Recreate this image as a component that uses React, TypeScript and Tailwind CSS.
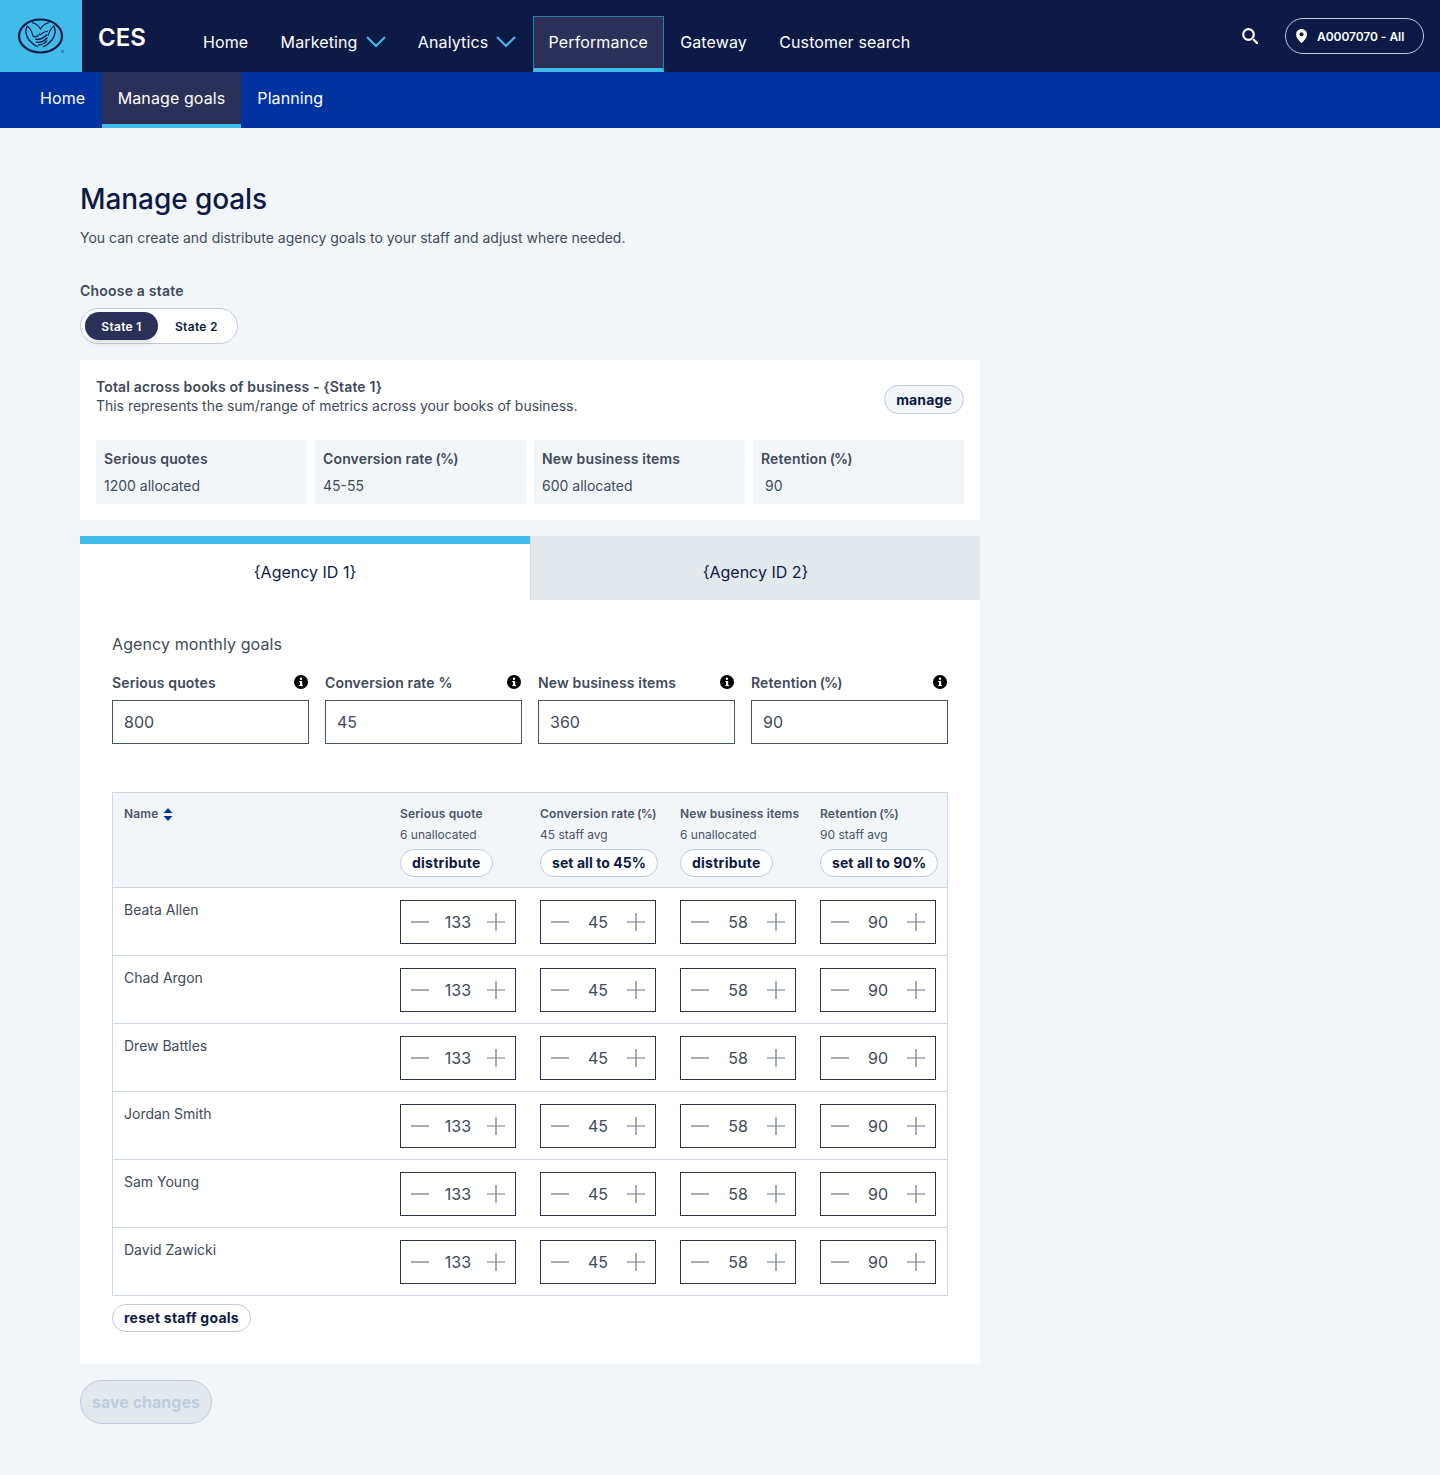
import React from "react";

const staff = ["Beata Allen", "Chad Argon", "Drew Battles", "Jordan Smith", "Sam Young", "David Zawicki"];
const stats = [
  { label: "Serious quotes", value: "1200 allocated" },
  { label: "Conversion rate", pct: true, value: "45-55" },
  { label: "New business items", value: "600 allocated" },
  { label: "Retention", pct: true, value: "90", indent: true },
];
const goals = [
  { label: "Serious quotes", value: "800" },
  { label: "Conversion rate %", value: "45" },
  { label: "New business items", value: "360" },
  { label: "Retention", pct: true, value: "90" },
];
const columns = [
  { title: "Serious quote", sub: "6 unallocated", action: "distribute" },
  { title: "Conversion rate", pct: true, sub: "45 staff avg", action: "set all to 45%" },
  { title: "New business items", sub: "6 unallocated", action: "distribute" },
  { title: "Retention", pct: true, sub: "90 staff avg", action: "set all to 90%" },
];

// the "(%)" is set tighter than the rest of the label
const Pct = () => <span className="tracking-[-0.8px]"> (%)</span>;

const Logo = () => (
  <svg width="48" height="38" viewBox="0 0 48 38" fill="none" stroke="#0d1a45">
    <ellipse cx="23.5" cy="19" rx="21.5" ry="16.500" strokeWidth="2.200" />
    <path d="M15 5.500c3.500 1 6.500 3 8.500 6.500 2-3.500 5-5.500 8.500-6.500" strokeWidth="1.300" />
    <path d="M10 9c-2 5-1 10 2 14 2.500 3 5.500 5.500 9 7" strokeWidth="1.300" />
    <path d="M37 9c2 5 1 10-2 14-2.500 3-5.500 5.500-9 7" strokeWidth="1.300" />
    <path d="M10 9c3 2 5 6 6 10M37 9c-3 2-5 6-6 10M16 19c2 1.500 5 1 7-2.500M31 14c-3 .500-6 2-8 4" strokeWidth="1.100" />
    <path d="M18 22c4 1.500 9-1 12-4.500M19 25c4 1 8.500-1 11.500-4.500M21 28c3.500 0 7-1.500 9-4.500" strokeWidth="1.300" />
    <circle cx="45.500" cy="34.500" r="1" strokeWidth="0.500" />
  </svg>
);

const SearchIcon = () => (
  <svg width="16" height="16" viewBox="0 0 16 16" fill="none" stroke="#fff">
    <circle cx="6.500" cy="6.500" r="5.300" strokeWidth="2.200" />
    <path d="M12 12l3 3" strokeWidth="2.400" strokeLinecap="round" />
  </svg>
);

const PinIcon = () => (
  <svg width="11" height="14" viewBox="0 0 11 14">
    <path d="M5.500 0C2.500 0 0 2.400 0 5.400 0 9.300 5.500 14 5.500 14S11 9.300 11 5.400C11 2.400 8.500 0 5.500 0z" fill="#fff" />
    <circle cx="5.500" cy="5.300" r="2" fill="#0d1a45" />
  </svg>
);

const NavChevron = () => (
  <svg width="20" height="12" viewBox="0 0 20 12" fill="none" stroke="#41bbe8" strokeWidth="2">
    <path d="M1 1l9 9 9-9" />
  </svg>
);

const InfoDot = () => (
  <svg width="14" height="14" viewBox="0 0 14 14" className="-mt-[2px] mr-px">
    <circle cx="7" cy="7" r="7" fill="#000" />
    <rect x="6" y="6" width="2.200" height="5" fill="#fff" />
    <rect x="5.200" y="6" width="1.500" height="1.100" fill="#fff" />
    <rect x="5.200" y="10.100" width="3.800" height="1" fill="#fff" />
    <circle cx="7" cy="3.800" r="1.200" fill="#fff" />
  </svg>
);

const SortArrows = () => (
  <svg width="10" height="13" viewBox="0 0 10 13" fill="#0033a0">
    <path d="M5 0l4.500 5h-9z" />
    <path d="M5 13l4.500-5h-9z" />
  </svg>
);

const MinusIcon = () => (
  <svg width="18" height="18" viewBox="0 0 18 18" fill="none" stroke="#8b91a6" strokeWidth="1.500">
    <path d="M0 9h18" />
  </svg>
);

const PlusIcon = () => (
  <svg width="18" height="18" viewBox="0 0 18 18" fill="none" stroke="#6f7689" strokeWidth="1.200">
    <path d="M0 9h18M9 0v18" />
  </svg>
);

const Pill = ({ children, wide }: { children: React.ReactNode; wide?: boolean }) => (
  <button
    className={
      wide
        ? "inline-flex h-7 items-center whitespace-nowrap rounded-full border border-[#c0cbdc] bg-white px-[11px] text-sm font-bold tracking-[0.25px] text-[#0d1a45]"
        : "inline-flex h-7 items-center whitespace-nowrap rounded-full border border-[#c0cbdc] bg-white px-[11px] text-sm font-bold tracking-[0.07px] text-[#0d1a45]"
    }
  >
    {children}
  </button>
);

const Stepper = ({ value }: { value: string }) => (
  <div className="flex h-11 w-[116px] items-center justify-between border border-[#2d3748] bg-white px-[10px]">
    <MinusIcon />
    <span className="text-base text-[#3f4a5a]">{value}</span>
    <PlusIcon />
  </div>
);

const NavItem = ({ label, menu, active }: { label: string; menu?: boolean; active?: boolean }) => (
  <div
    className={
      active
        ? "mt-4 flex h-14 items-center border-x border-t border-[#2e7ea8] border-b-4 border-b-[#41bbe8] bg-[#2a3057] px-[15px] pb-px text-base tracking-[0.12px] text-white"
        : "mt-4 flex h-14 items-center gap-2 px-4 pb-[4px] text-base tracking-[0.12px] text-white"
    }
  >
    {label}
    {menu && <NavChevron />}
  </div>
);

export default function App() {
  return (
    <div className="min-h-[1475px] bg-[#f2f6f9] font-['Inter',sans-serif] text-[#3f4a5a]">
      <header className="flex h-[72px] items-start bg-[#0d1a45]">
        <div className="flex h-[72px] w-[82px] items-center justify-center bg-[#41bbe8]">
          <Logo />
        </div>
        <div className="ml-4 mt-[20px] w-[89px] text-2xl font-semibold leading-9 text-white">CES</div>
        <nav className="flex gap-[0.3px]">
          <NavItem label="Home" />
          <NavItem label="Marketing" menu />
          <NavItem label="Analytics" menu />
          <NavItem label="Performance" active />
          <NavItem label="Gateway" />
          <NavItem label="Customer search" />
        </nav>
        <div className="ml-auto mr-4 mt-[18px] flex items-center gap-[27px]">
          <SearchIcon />
          <div className="flex h-9 w-[139px] items-center gap-[10px] rounded-full border border-[#c0cbdc] pl-[10px] text-xs font-semibold text-white">
            <PinIcon />
            <span className="pt-px tracking-[-0.05px]">A0007070 - All</span>
          </div>
        </div>
      </header>

      <div className="flex h-14 items-start bg-[#0033a0] pl-6 text-base tracking-[0.1px] text-white">
        <div className="flex h-14 items-center pb-1 pl-4 pr-[16.5px]">Home</div>
        <div className="flex h-14 items-center border-b-4 border-[#41bbe8] bg-[#2a3057] px-4">Manage goals</div>
        <div className="flex h-14 items-center px-4 pb-1">Planning</div>
      </div>

      <main className="w-[980px] pl-20 pt-[53px]">
        <h1 className="text-[28px] font-medium leading-9 tracking-[-0.08px] text-[#0d1a45]">Manage goals</h1>
        <p className="mt-[11px] text-sm leading-5">You can create and distribute agency goals to your staff and adjust where needed.</p>

        <div className="mt-[33px] text-sm font-semibold leading-5 tracking-[0.2px]">Choose a state</div>
        <div className="mt-[7px] flex h-9 w-[158px] items-center rounded-full border border-[#c0cbdc] bg-white pl-[4px] text-xs font-semibold tracking-[0.3px]">
          <div className="flex h-7 w-[73px] items-center justify-center rounded-full bg-[#2a3057] pt-px text-white shadow-md">State 1</div>
          <div className="ml-[17px] pt-px text-[#0d1a45]">State 2</div>
        </div>

        <section className="mt-4 bg-white p-4">
          <div className="flex h-16 items-start justify-between">
            <div className="mt-px text-sm leading-[19px]">
              <div className="font-semibold tracking-[0.14px]">Total across books of business - {"{State 1}"}</div>
              <div className="tracking-[-0.03px]">This represents the sum/range of metrics across your books of business.</div>
            </div>
            <button className="mt-[9px] inline-flex h-[29px] items-center rounded-full border border-[#c0cbdc] bg-[#f2f6f9] px-[11px] text-sm font-bold tracking-[0.15px] text-[#0d1a45]">manage</button>
          </div>
          <div className="grid grid-cols-4 gap-2">
            {stats.map((s) => (
              <div key={s.label} className="h-16 bg-[#f2f6f9] px-2 pt-[9px] text-sm leading-5">
                <div className="font-semibold tracking-[0.15px]">{s.label}{s.pct && <Pct />}</div>
                <div className={s.indent ? "mt-[7px] pl-1" : "mt-[7px]"}>{s.value}</div>
              </div>
            ))}
          </div>
        </section>

        <div className="mt-4 grid grid-cols-2">
          <div className="flex h-16 items-center justify-center border-t-8 border-[#41bbe8] bg-white text-base text-[#0d1a45]">{"{Agency ID 1}"}</div>
          <div className="flex h-16 items-center justify-center border-l border-[#d4dbe5] bg-[#e3e8ed] pt-2 text-base text-[#0d1a45]">{"{Agency ID 2}"}</div>
        </div>

        <section className="bg-white px-8 pb-8 pt-8">
          <h2 className="text-base leading-6 tracking-[0.1px]">Agency monthly goals</h2>
          <div className="mt-[17px] grid grid-cols-4 gap-4">
            {goals.map((g) => (
              <div key={g.label}>
                <div className="flex items-center justify-between text-sm font-semibold leading-5 tracking-[0.15px]">
                  <span>{g.label}{g.pct && <Pct />}</span>
                  <InfoDot />
                </div>
                <div className="mt-[7px] flex h-11 items-center border border-[#4a5568] px-[11px] text-base">{g.value}</div>
              </div>
            ))}
          </div>

          <div className="mt-12 border border-[#cfd8e5]">
            <div className="grid h-[94px] grid-cols-[287px_140px_140px_140px_1fr] bg-[#f2f6f9] pt-[13px]">
              <div className="flex items-center gap-1 self-start pl-[11px] text-xs font-semibold leading-4 tracking-[0.15px] text-[#4a5568]">
                Name <SortArrows />
              </div>
              {columns.map((c) => (
                <div key={c.title} className="text-xs leading-4 text-[#4a5568]">
                  <div className="font-semibold tracking-[0.18px]">{c.title}{c.pct && <Pct />}</div>
                  <div className="mt-[5px]">{c.sub}</div>
                  <div className="mt-[6px]"><Pill wide={c.action === "distribute"}>{c.action}</Pill></div>
                </div>
              ))}
            </div>
            {staff.map((name) => (
              <div key={name} className="grid h-[68px] grid-cols-[287px_140px_140px_140px_1fr] border-t border-[#cfd8e5] pt-3">
                <div className="pl-[11px] text-sm leading-5">{name}</div>
                <Stepper value="133" />
                <Stepper value="45" />
                <Stepper value="58" />
                <Stepper value="90" />
              </div>
            ))}
          </div>
          <div className="mt-2"><Pill wide>reset staff goals</Pill></div>
        </section>

        <button className="mt-4 h-11 w-[132px] rounded-full border border-[#c0cbdc] bg-[#e3e8ed] text-base font-bold text-[#c0cbdc]">save changes</button>
      </main>
    </div>
  );
}
